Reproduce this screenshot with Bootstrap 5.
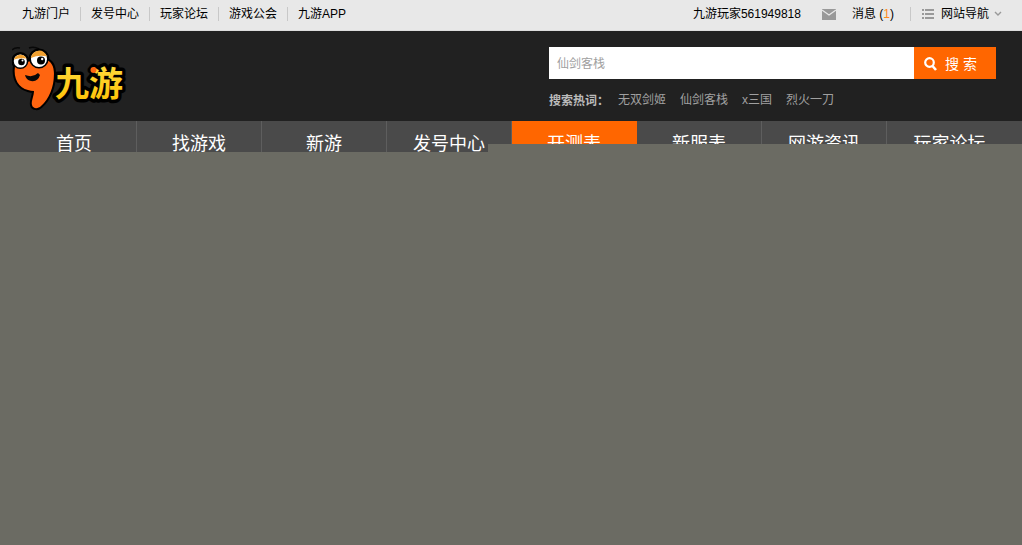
<!DOCTYPE html>
<html lang="zh-CN">
<head>
<meta charset="utf-8">
<meta name="viewport" content="width=device-width, initial-scale=1">
<title>九游</title>
<link rel="stylesheet" href="https://cdn.jsdelivr.net/npm/bootstrap@5.3.0/dist/css/bootstrap.min.css">
<style>
  body { font: 12px/18px "Liberation Sans", "Noto Sans CJK SC", sans-serif; background: #6b6b63; color: #000; }
  a { color: inherit; text-decoration: none; }
  .wrap { padding: 0 10px 0 12px; }
  .topbar { height: 31px; padding-bottom: 2px; background: #e8e8e8; border-bottom: 1px solid #dcdcdc; }
  .toplinks a { padding: 0 10px; line-height: 14px; border-right: 1px solid #c8c8c8; }
  .toplinks li:last-child a { border-right: 0; }
  .user-tools { padding-right: 10px; }
  .mail { margin: 0 16px 0 21px; }
  .sitemap-link { margin-left: 16px; padding-left: 11px; line-height: 14px; border-left: 1px solid #c8c8c8; }
  .sitemap-link span { margin: 0 5px 0 7px; }
  .count { color: #ff8a1c; }
  .masthead { height: 90px; background: #212121; }
  .search-area { width: 447px; margin-right: 16px; padding-top: 16px; }
  .search-area .form-control { height: 32px; padding: 2px 8px 0; border: 0; border-radius: 0; font-size: 12px; background: #fff; }
  .search-area .form-control::placeholder { color: #a0a0a0; }
  .search-area .btn { width: 82px; height: 32px; padding: 2px 0 0 10px; border: 0; border-radius: 0; background: #ff6600; color: #fff; font-size: 14px; }
  .hot { margin-top: 12px; color: #a0a0a0; }
  .hot-label { flex: none; width: 69px; color: #bbb; font-family: "Noto Sans CJK SC", sans-serif; font-weight: bold; }
  .hot-words { gap: 14px; }
  .mainnav { height: 31px; background: #4a4a4a; overflow: hidden; }
  .mainnav li { flex: 1 1 0; }
  .mainnav a { display: block; height: 46px; line-height: 46px; font-size: 18px; text-align: center; color: #fff; border-right: 1px solid #5e5e5e; }
  .mainnav li:last-child a { border-right: 0; }
  .mainnav a.active { background: #ff6600; border-color: #ff6600; }
  .page-cover { background: #6b6b63; }
  .page-cover::before { content: ""; position: absolute; top: -8px; right: 0; left: 488px; height: 8px; background: #6b6b63; }
</style>
</head>
<body class="d-flex flex-column min-vh-100">
<div class="topbar">
  <div class="wrap d-flex justify-content-between align-items-center h-100">
    <ul class="toplinks list-unstyled d-flex m-0">
      <li class="d-flex"><a href="#">九游门户</a></li>
      <li class="d-flex"><a href="#">发号中心</a></li>
      <li class="d-flex"><a href="#">玩家论坛</a></li>
      <li class="d-flex"><a href="#">游戏公会</a></li>
      <li class="d-flex"><a href="#">九游APP</a></li>
    </ul>
    <div class="user-tools d-flex align-items-center">
      <a href="#">九游玩家561949818</a>
      <svg class="mail" width="14" height="11" viewBox="0 0 14 11" aria-hidden="true"><path d="M0 0h14v11H0z" fill="#999"/><path d="M0 1l7 5 7-5" fill="none" stroke="#e8e8e8" stroke-width="1.2"/></svg>
      <a href="#">消息 (<span class="count">1</span>)</a>
      <a href="#" class="sitemap-link d-flex align-items-center">
        <svg width="12" height="10" viewBox="0 0 12 10" aria-hidden="true"><path d="M0 1h2M3 1h9M0 5h2M3 5h9M0 9h2M3 9h9" stroke="#999" stroke-width="1.8"/></svg>
        <span>网站导航</span>
        <svg width="8" height="6" viewBox="0 0 8 6" aria-hidden="true"><path d="M1 1l3 3 3-3" fill="none" stroke="#999" stroke-width="1.4"/></svg>
      </a>
    </div>
  </div>
</div>

<header class="masthead">
  <div class="wrap d-flex justify-content-between">
    <a href="#" aria-label="九游">
      <svg class="d-block" width="116" height="84" viewBox="12 31 116 84">
        <defs>
          <linearGradient id="gold" x1="0" y1="0" x2="0" y2="1"><stop offset="0" stop-color="#ffe048"/><stop offset="1" stop-color="#ffc000"/></linearGradient>
        </defs>
        <path d="M12 50Q15 47 20 48M29 48q5-2 10 1" fill="none" stroke="#080808" stroke-width="1.500"/>
        <g fill="#000" stroke="#000" stroke-width="4" stroke-linejoin="round">
          <path id="nine" d="M15 66C13 79 19 88 28 90Q31 91 34 91C34 96 31 101 32 105C33 109 38 109 41 106C49 99 54 87 54 74C54 66 51 61 46 60L24 62Z"/>
          <circle cx="20.300" cy="61" r="7"/><circle cx="39" cy="59" r="8.500"/>
        </g>
        <use href="#nine" fill="#ff6510"/>
        <circle cx="20.300" cy="61" r="7.300" fill="#fff" stroke="#000" stroke-width="1.500"/>
        <circle cx="39" cy="59" r="8.800" fill="#fff" stroke="#000" stroke-width="1.500"/>
        <path d="M14 59.500a6.800 6.800 0 0 1 12.600-1q-6-1-12.600 1ZM30.800 58a8.300 8.300 0 0 1 16.200-1.500q-8-2-16.200 1.500Z" fill="#f0a030"/>
        <circle cx="21.500" cy="62" r="3.300"/><circle cx="41" cy="60.500" r="4"/>
        <circle cx="22.500" cy="60.500" r="1" fill="#fff"/><circle cx="42.200" cy="59" r="1.200" fill="#fff"/>
        <path d="M25 75Q33 78 38 73L40 75Q38 82 31 81Q26 80 25 75Z" fill="#090909"/>
        <text x="55" y="96" font-family="Noto Sans CJK SC, sans-serif" font-size="34" font-weight="700" fill="url(#gold)" stroke="#000" stroke-width="7" stroke-linejoin="round" paint-order="stroke">九游</text>
        <circle cx="93.500" cy="70" r="3" fill="#ff6510"/>
      </svg>
    </a>
    <div class="search-area">
      <form class="d-flex" onsubmit="return false">
        <input class="form-control" type="text" placeholder="仙剑客栈" aria-label="搜索游戏">
        <button class="btn d-flex flex-shrink-0 align-items-center gap-2" type="submit">
          <svg width="13" height="14" viewBox="0 0 13 14" aria-hidden="true"><circle cx="5.500" cy="5.500" r="4.300" fill="none" stroke="#fff" stroke-width="2.200"/><path d="M8.500 9l3.500 4" stroke="#fff" stroke-width="2.600"/></svg>
          <span>搜 索</span>
        </button>
      </form>
      <div class="hot d-flex">
        <span class="hot-label">搜索热词：</span>
        <div class="hot-words d-flex">
          <a href="#">无双剑姬</a>
          <a href="#">仙剑客栈</a>
          <a href="#">x三国</a>
          <a href="#">烈火一刀</a>
        </div>
      </div>
    </div>
  </div>
</header>

<nav class="mainnav">
  <ul class="wrap list-unstyled d-flex m-0">
    <li><a href="#">首页</a></li>
    <li><a href="#">找游戏</a></li>
    <li><a href="#">新游</a></li>
    <li><a href="#">发号中心</a></li>
    <li><a href="#" class="active" aria-current="page">开测表</a></li>
    <li><a href="#">新服表</a></li>
    <li><a href="#">网游资讯</a></li>
    <li><a href="#">玩家论坛</a></li>
  </ul>
</nav>
<main class="page-cover position-relative flex-grow-1"></main>
<script src="https://cdn.jsdelivr.net/npm/bootstrap@5.3.0/dist/js/bootstrap.bundle.min.js"></script>
</body>
</html>
